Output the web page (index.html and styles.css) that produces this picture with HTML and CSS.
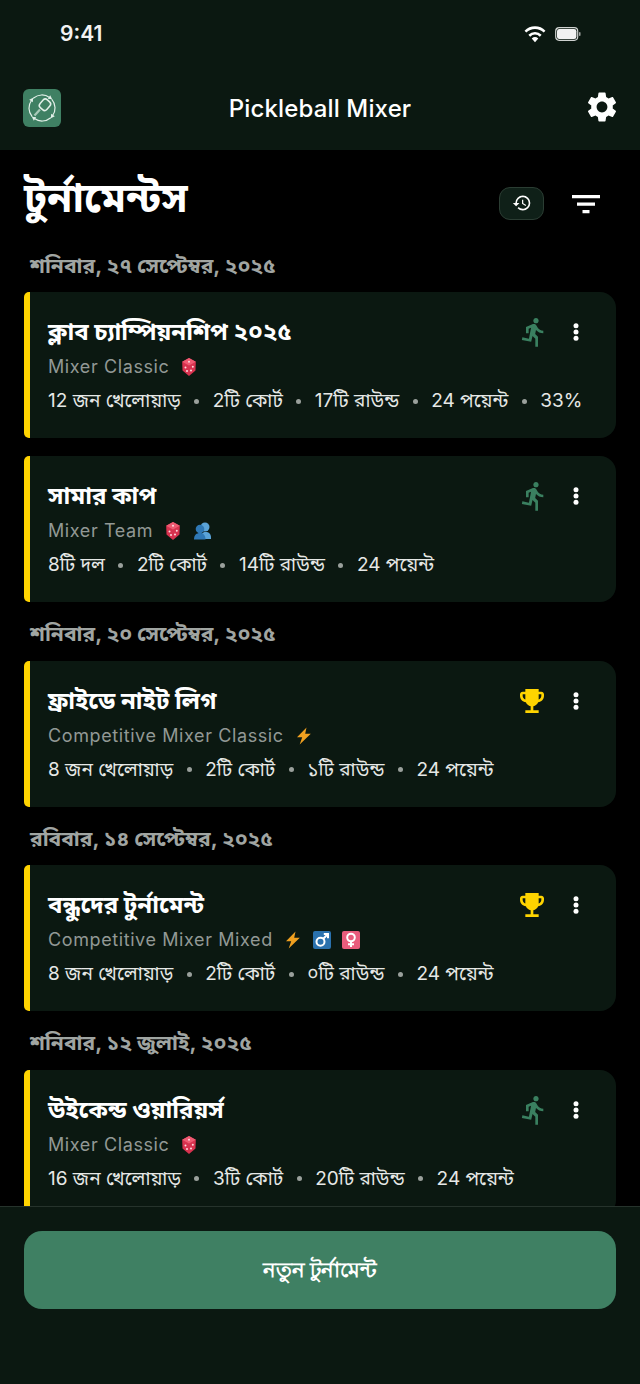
FILE: index.html
```html
<!DOCTYPE html>
<html lang="bn">
<head>
<meta charset="utf-8">
<title>Pickleball Mixer</title>
<link rel="stylesheet" href="styles.css">
</head>
<body>
<svg class="defs" width="0" height="0" aria-hidden="true">
  <symbol id="run" viewBox="0 0 24 24"><path d="M13.49 5.48c1.1 0 2-.9 2-2s-.9-2-2-2-2 .9-2 2 .9 2 2 2zm-3.600 13.900l1-4.400 2.100 2v6h2v-7.500l-2.100-2 .6-3c1.300 1.500 3.300 2.500 5.500 2.500v-2c-1.900 0-3.500-1-4.300-2.400l-1-1.600c-.4-.6-1-1-1.700-1-.3 0-.5.100-.8.100l-5.200 2.200v4.700h2v-3.400l1.800-.7-1.600 8.100-4.900-1-.4 2 7 1.400z"/></symbol>
  <symbol id="dots" viewBox="0 0 24 24"><circle cx="12" cy="4.500" r="3"/><circle cx="12" cy="12" r="3"/><circle cx="12" cy="19.500" r="3"/></symbol>
  <symbol id="trophy" viewBox="0 0 24 24"><path d="M19 5h-2V3H7v2H5C3.900 5 3 5.900 3 7v1c0 2.550 1.920 4.630 4.390 4.940.63 1.500 1.980 2.630 3.610 2.960V19H7v2h10v-2h-4v-3.100c1.630-.33 2.980-1.460 3.610-2.960C19.080 12.630 21 10.550 21 8V7c0-1.100-.9-2-2-2zM5 8V7h2v3.820C5.840 10.400 5 9.300 5 8zm14 0c0 1.300-.84 2.400-2 2.820V7h2v1z"/></symbol>
  <symbol id="dice" viewBox="0 0 18 20"><path d="M9 1l6.800 3.800-.3 8.600L9 19l-6.500-5.600-.3-8.600z" fill="#d8324f"/><path d="M9 1l6.800 3.800L9 8.500 2.200 4.800z" fill="#ef5a72"/><g fill="#ffd9de"><circle cx="9" cy="4.700" r="1"/><circle cx="5.500" cy="10.500" r="1"/><circle cx="7" cy="14" r="1"/><circle cx="12.800" cy="9.800" r="1"/><circle cx="11" cy="13.500" r="1"/></g></symbol>
  <symbol id="people" viewBox="0 0 18 20"><circle cx="12" cy="6" r="4.500" fill="#5aa3d8"/><path d="M8 18c0-4.500 1-7 4.500-7s5.500 2 5.500 5.500V18z" fill="#5aa3d8"/><circle cx="7" cy="8" r="4.300" fill="#2f78b5"/><path d="M1 18.500c0-4.500 2.500-6.500 6-6.500s5.500 2.500 5.500 6.500z" fill="#2f78b5"/></symbol>
  <symbol id="bolt" viewBox="0 0 18 18"><path d="M11.500 0.500L2 10.200h5.200L4.700 17.500 15.800 6.800h-5.600z" fill="#f0a020"/></symbol>
  <symbol id="male" viewBox="0 0 18 18"><rect width="18" height="18" rx="2" fill="#2a71ad"/><g fill="none" stroke="#fff" stroke-width="2"><circle cx="7.500" cy="10.800" r="4"/><path d="M10.500 7.500L15 3M10.800 3H15v4.200"/></g></symbol>
  <symbol id="female" viewBox="0 0 18 18"><rect width="18" height="18" rx="2" fill="#e85c7c"/><g fill="none" stroke="#fff" stroke-width="2"><circle cx="9" cy="6.500" r="3.800"/><path d="M9 10.300V16M6 13.300h6"/></g></symbol>
</svg>
<div class="app">
  <div class="topbar">
    <div class="status">
      <span class="time">9:41</span>
      <span class="status-icons">
        <svg class="wifi" viewBox="0 0 20 16"><path d="M10 15.500l3-3.500a4.500 4.500 0 0 0-6 0zM10 6.200a8.500 8.500 0 0 0-6 2.500l1.600 1.700a6.200 6.200 0 0 1 8.800 0L16 8.700a8.500 8.500 0 0 0-6-2.500zM10 1a13.500 13.500 0 0 0-9.500 4l1.600 1.700a11.200 11.200 0 0 1 15.800 0L19.500 5A13.500 13.500 0 0 0 10 1z" fill="#fff"/></svg>
        <svg class="battery" viewBox="0 0 26 14"><rect x=".7" y=".7" width="22" height="12.600" rx="3.500" fill="none" stroke="#cfd2d0" stroke-width="1.200"/><rect x="2" y="2" width="19.400" height="10" rx="2.300" fill="#f2f2f2"/><rect x="24" y="5" width="1.500" height="4" rx=".7" fill="#a5a8a6"/></svg>
      </span>
    </div>
    <header class="header">
      <span class="logo">
        <svg viewBox="0 0 38 38" fill="none" stroke="#e3f0e9" stroke-width="1.200">
          <g id="logo-arc"><path d="M10.600 9A13 13 0 0 1 26.500 8.400" stroke-linecap="round"/><path d="M29.200 10.200L27.200 6.200 24.800 9.800z" fill="#e3f0e9" stroke="none"/></g>
          <use href="#logo-arc" transform="rotate(90 19 19)"/>
          <use href="#logo-arc" transform="rotate(180 19 19)"/>
          <use href="#logo-arc" transform="rotate(270 19 19)"/>
          <rect x="17.500" y="10.500" width="9" height="10.500" rx="3" transform="rotate(42 22 15.700)" stroke-width="1.500"/>
          <path d="M17 20.500l-5.500 6" stroke-width="2.200" stroke="#a9c9b8"/>
        </svg>
      </span>
      <h1 class="app-name">Pickleball Mixer</h1>
      <svg class="gear" viewBox="0 0 24 24"><path fill="#fff" d="M19.140 12.940c.04-.3.060-.61.060-.94 0-.32-.02-.64-.07-.94l2.030-1.580c.18-.14.230-.41.120-.61l-1.920-3.320c-.12-.22-.37-.29-.59-.22l-2.390.96c-.5-.38-1.030-.7-1.620-.94l-.36-2.540c-.04-.24-.24-.41-.48-.41h-3.840c-.24 0-.43.170-.47.410l-.36 2.540c-.59.240-1.130.57-1.620.94l-2.390-.96c-.22-.08-.47 0-.59.220L2.740 8.870c-.12.210-.08.470.12.610l2.030 1.580c-.05.3-.09.630-.09.940s.02.640.07.940l-2.030 1.580c-.18.140-.23.410-.12.610l1.920 3.320c.12.220.37.290.59.220l2.390-.96c.5.380 1.030.7 1.620.94l.36 2.540c.05.240.24.410.48.410h3.840c.24 0 .44-.17.470-.41l.36-2.540c.59-.24 1.130-.56 1.620-.94l2.390.96c.22.080.47 0 .59-.22l1.920-3.320c.12-.22.070-.47-.12-.61l-2.010-1.580zM12 15.600c-1.980 0-3.600-1.620-3.600-3.600s1.620-3.600 3.600-3.600 3.600 1.620 3.600 3.600-1.620 3.600-3.600 3.600z"/></svg>
    </header>
  </div>

  <main class="main">
    <div class="title-row">
      <h2 class="page-title">টুর্নামেন্টস</h2>
      <div class="tools">
        <span class="history"><svg viewBox="0 0 24 24"><path fill="#fff" d="M13 3a9 9 0 0 0-9 9H1l3.890 3.890.07.14L9 12H6c0-3.870 3.130-7 7-7s7 3.130 7 7-3.130 7-7 7c-1.930 0-3.680-.79-4.940-2.060l-1.420 1.420A8.954 8.954 0 0 0 13 21a9 9 0 0 0 0-18zm-1 5v5l4.280 2.540.72-1.210-3.500-2.080V8H12z"/></svg></span>
        <svg class="filter" viewBox="0 0 28 20"><path fill="#fff" d="M0 1h28v3.200H0zM5 8.500h18v3.200H5zM10.500 16h7v3.200h-7z"/></svg>
      </div>
    </div>

    <div class="date">শনিবার, ২৭ সেপ্টেম্বর, ২০২৫</div>
    <article class="card">
      <div class="card-top"><h3 class="card-title">ক্লাব চ্যাম্পিয়নশিপ ২০২৫</h3><svg class="st run"><use href="#run"/></svg><svg class="more"><use href="#dots"/></svg></div>
      <div class="sub">Mixer Classic <svg class="emo"><use href="#dice"/></svg></div>
      <div class="meta"><span>12 জন খেলোয়াড়</span><i></i><span>2টি কোর্ট</span><i></i><span>17টি রাউন্ড</span><i></i><span>24 পয়েন্ট</span><i></i><span>33%</span></div>
    </article>
    <article class="card">
      <div class="card-top"><h3 class="card-title">সামার কাপ</h3><svg class="st run"><use href="#run"/></svg><svg class="more"><use href="#dots"/></svg></div>
      <div class="sub">Mixer Team <svg class="emo"><use href="#dice"/></svg><svg class="emo"><use href="#people"/></svg></div>
      <div class="meta"><span>8টি দল</span><i></i><span>2টি কোর্ট</span><i></i><span>14টি রাউন্ড</span><i></i><span>24 পয়েন্ট</span></div>
    </article>

    <div class="date">শনিবার, ২০ সেপ্টেম্বর, ২০২৫</div>
    <article class="card">
      <div class="card-top"><h3 class="card-title">ফ্রাইডে নাইট লিগ</h3><svg class="st cup"><use href="#trophy"/></svg><svg class="more"><use href="#dots"/></svg></div>
      <div class="sub">Competitive Mixer Classic <svg class="emo"><use href="#bolt"/></svg></div>
      <div class="meta"><span>8 জন খেলোয়াড়</span><i></i><span>2টি কোর্ট</span><i></i><span>১টি রাউন্ড</span><i></i><span>24 পয়েন্ট</span></div>
    </article>

    <div class="date">রবিবার, ১৪ সেপ্টেম্বর, ২০২৫</div>
    <article class="card">
      <div class="card-top"><h3 class="card-title">বন্ধুদের টুর্নামেন্ট</h3><svg class="st cup"><use href="#trophy"/></svg><svg class="more"><use href="#dots"/></svg></div>
      <div class="sub">Competitive Mixer Mixed <svg class="emo"><use href="#bolt"/></svg><svg class="emo"><use href="#male"/></svg><svg class="emo"><use href="#female"/></svg></div>
      <div class="meta"><span>8 জন খেলোয়াড়</span><i></i><span>2টি কোর্ট</span><i></i><span>০টি রাউন্ড</span><i></i><span>24 পয়েন্ট</span></div>
    </article>

    <div class="date">শনিবার, ১২ জুলাই, ২০২৫</div>
    <article class="card">
      <div class="card-top"><h3 class="card-title">উইকেন্ড ওয়ারিয়র্স</h3><svg class="st run"><use href="#run"/></svg><svg class="more"><use href="#dots"/></svg></div>
      <div class="sub">Mixer Classic <svg class="emo"><use href="#dice"/></svg></div>
      <div class="meta"><span>16 জন খেলোয়াড়</span><i></i><span>3টি কোর্ট</span><i></i><span>20টি রাউন্ড</span><i></i><span>24 পয়েন্ট</span></div>
    </article>
  </main>

  <footer class="footer">
    <button class="new-btn">নতুন টুর্নামেন্ট</button>
  </footer>
</div>
</body>
</html>
```

FILE: styles.css
```css
* { box-sizing: border-box; margin: 0; padding: 0; }
html, body { height: 100%; }
body {
  background: #000;
  color: #fff;
  font-family: Inter, "Noto Sans", "Noto Sans Bengali", "Noto Serif Bengali", sans-serif;
  overflow: hidden;
}
.defs { position: absolute; }
.app { width: 640px; height: 1384px; display: flex; flex-direction: column; }

.topbar { background: #0b1811; height: 150px; flex: none; }
.status { height: 66px; padding: 21px 59px 0 60px; display: flex; justify-content: space-between; align-items: flex-start; }
.time { font-size: 21px; font-weight: 600; line-height: 26px; color: #f2f2f2; }
.status-icons { display: flex; align-items: center; gap: 9px; padding-top: 4px; }
.wifi { width: 22px; height: 18px; }
.battery { width: 26px; height: 14px; }

.header { height: 84px; padding: 0 20px; display: grid; grid-template-columns: 1fr auto 1fr; align-items: center; }
.logo { width: 38px; height: 38px; border-radius: 6px; background: #3f8063; display: block; margin-left: 3px; }
.logo svg { width: 38px; height: 38px; display: block; }
.app-name { font-size: 24px; font-weight: 500; line-height: 30px; letter-spacing: .15px; color: #fff; margin-top: 2px; }
.gear { width: 36px; height: 36px; margin-top: -2px; justify-self: end; }

.main { flex: 1; min-height: 0; overflow: hidden; padding: 0 24px; }
.title-row { height: 90px; display: flex; align-items: center; justify-content: space-between; padding-top: 4px; }
.page-title { font-size: 41px; font-weight: 700; line-height: 50px; }
.tools { display: flex; align-items: center; gap: 28px; padding-right: 16px; padding-top: 14px; }
.history { width: 45px; height: 33px; border-radius: 11px; background: #0f2018; border: 1px solid #2b3d33; display: flex; align-items: center; justify-content: center; margin-bottom: 2px; }
.history svg { width: 20px; height: 20px; }
.filter { width: 28px; height: 20px; }

.date { font-size: 21px; font-weight: 700; line-height: 26px; color: #a0a5a2; padding-left: 6px; margin: 19px 0 13.500px; }
.title-row + .date { margin-top: 12.500px; }

.card { height: 146px; background: #0b1811; border-radius: 5px 16px 16px 5px; border-left: 6px solid #ffd400; padding: 22px 24px 0 18px; margin-bottom: 18px; }
.card-top { display: flex; align-items: center; height: 36px; }
.card-title { flex: 1; font-size: 24px; font-weight: 700; line-height: 36px; }
.st { width: 32px; height: 32px; margin-right: 16px; }
.run { fill: #3a8060; }
.cup { fill: #ffd400; margin-right: 18px; }
.more { width: 20px; height: 24px; fill: #fff; margin-right: 6px; }
.sub { font-size: 18px; line-height: 26px; letter-spacing: .6px; color: #929895; margin-top: 4px; display: flex; align-items: center; gap: 11px; }
.emo { width: 18px; height: 20px; }
.meta { font-size: 19px; line-height: 26px; color: #e6e8e6; margin-top: 8px; display: flex; align-items: center; gap: 13.500px; white-space: nowrap; }
.meta i { width: 5px; height: 5px; border-radius: 50%; background: #9aa09c; }

.footer { flex: none; height: 178px; background: #0b1811; border-top: 1px solid #26332c; padding: 24px 24px 0; }
.new-btn { width: 100%; height: 78px; border: 0; border-radius: 18px; background: #3f8063; color: #fff; font: 700 21px/26px Inter, "Noto Sans", sans-serif; }
```
